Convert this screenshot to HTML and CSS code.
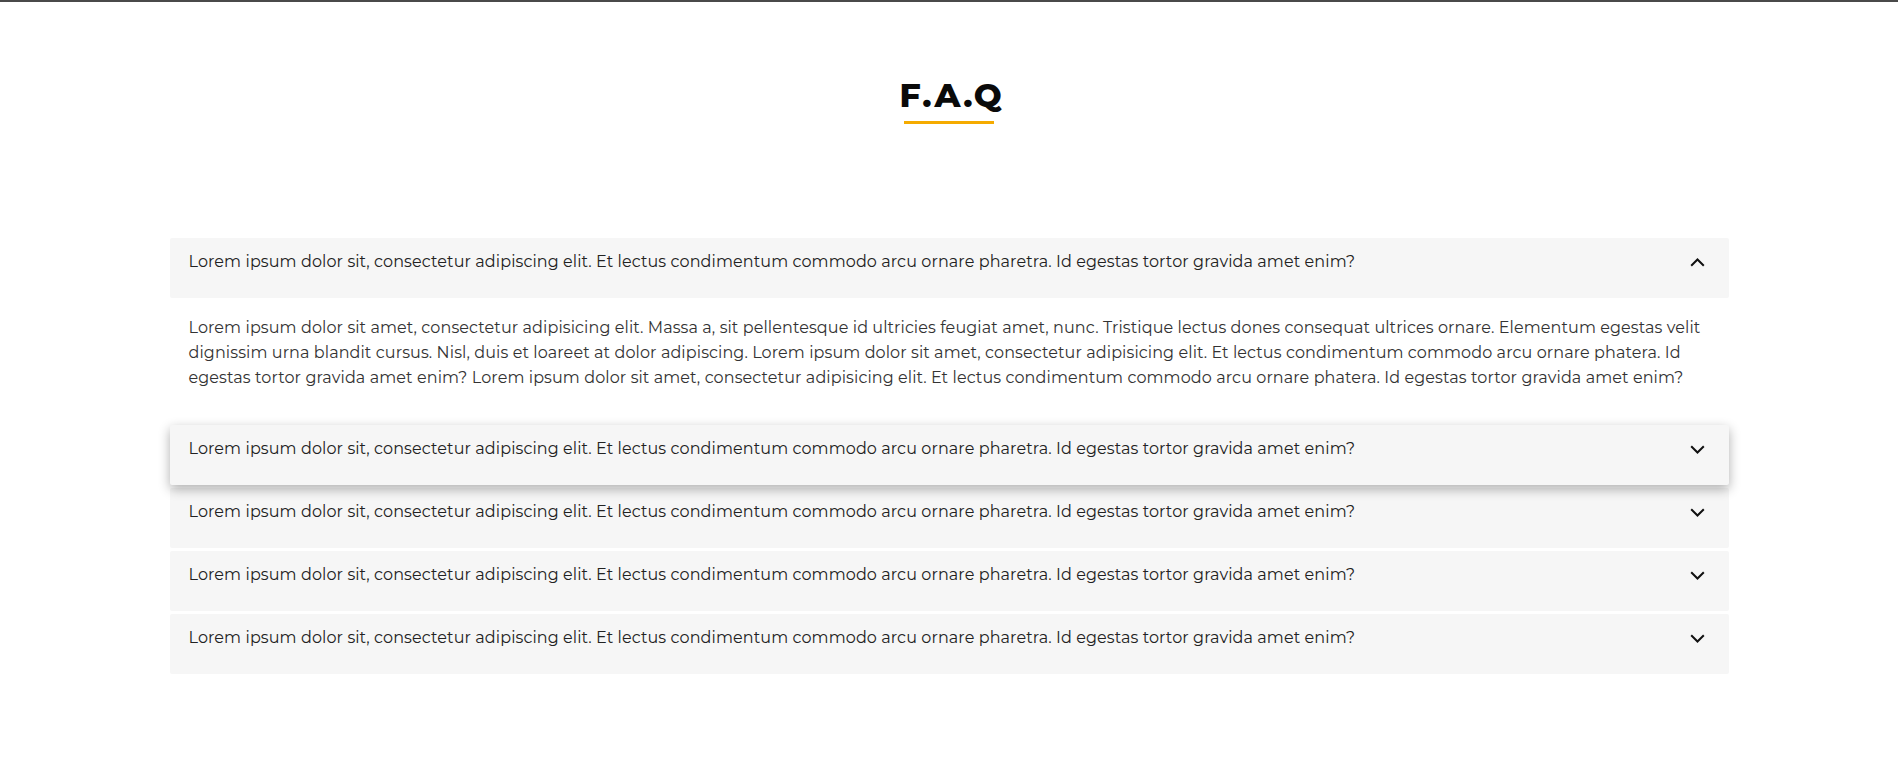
FILE: index.html
```html
<!DOCTYPE html>
<html lang="en">
<head>
<meta charset="utf-8">
<title>F.A.Q</title>
<link rel="stylesheet" href="styles.css">
</head>
<body>
<div class="topbar"></div>
<section class="faq">
  <div class="faq-title">
    <h2>F.A.Q</h2>
    <span class="faq-underline"></span>
  </div>
  <div class="accordion">
    <div class="item open">
      <div class="question">
        <span>Lorem ipsum dolor sit, consectetur adipiscing elit. Et lectus condimentum commodo arcu ornare pharetra. Id egestas tortor gravida amet enim?</span>
        <svg class="chev" width="15" height="9" viewBox="0 0 15 9"><path d="M1.2 7.8 L7.5 1.5 L13.8 7.8" fill="none" stroke="#111" stroke-width="2"/></svg>
      </div>
      <div class="answer">Lorem ipsum dolor sit amet, consectetur adipisicing elit. Massa a, sit pellentesque id ultricies feugiat amet, nunc. Tristique lectus dones consequat ultrices ornare. Elementum egestas velit dignissim urna blandit cursus. Nisl, duis et loareet at dolor adipiscing. Lorem ipsum dolor sit amet, consectetur adipisicing elit. Et lectus condimentum commodo arcu ornare phatera. Id egestas tortor gravida amet enim? Lorem ipsum dolor sit amet, consectetur adipisicing elit. Et lectus condimentum commodo arcu ornare phatera. Id egestas tortor gravida amet enim?</div>
    </div>
    <div class="item hover">
      <div class="question">
        <span>Lorem ipsum dolor sit, consectetur adipiscing elit. Et lectus condimentum commodo arcu ornare pharetra. Id egestas tortor gravida amet enim?</span>
        <svg class="chev" width="15" height="9" viewBox="0 0 15 9"><path d="M1.2 1.2 L7.5 7.5 L13.8 1.2" fill="none" stroke="#111" stroke-width="2"/></svg>
      </div>
    </div>
    <div class="item">
      <div class="question">
        <span>Lorem ipsum dolor sit, consectetur adipiscing elit. Et lectus condimentum commodo arcu ornare pharetra. Id egestas tortor gravida amet enim?</span>
        <svg class="chev" width="15" height="9" viewBox="0 0 15 9"><path d="M1.2 1.2 L7.5 7.5 L13.8 1.2" fill="none" stroke="#111" stroke-width="2"/></svg>
      </div>
    </div>
    <div class="item">
      <div class="question">
        <span>Lorem ipsum dolor sit, consectetur adipiscing elit. Et lectus condimentum commodo arcu ornare pharetra. Id egestas tortor gravida amet enim?</span>
        <svg class="chev" width="15" height="9" viewBox="0 0 15 9"><path d="M1.2 1.2 L7.5 7.5 L13.8 1.2" fill="none" stroke="#111" stroke-width="2"/></svg>
      </div>
    </div>
    <div class="item">
      <div class="question">
        <span>Lorem ipsum dolor sit, consectetur adipiscing elit. Et lectus condimentum commodo arcu ornare pharetra. Id egestas tortor gravida amet enim?</span>
        <svg class="chev" width="15" height="9" viewBox="0 0 15 9"><path d="M1.2 1.2 L7.5 7.5 L13.8 1.2" fill="none" stroke="#111" stroke-width="2"/></svg>
      </div>
    </div>
  </div>
</section>
</body>
</html>
```

FILE: styles.css
```css
* { box-sizing: border-box; }
html, body {
  margin: 0;
  padding: 0;
  background: #fff;
}
body {
  font-family: Montserrat, Inter, "Noto Sans", sans-serif;
  color: #222;
}
.topbar {
  height: 2px;
  background: #4a4a4a;
}
.faq {
  padding-top: 73px;
}
.faq-title {
  display: flex;
  flex-direction: column;
  align-items: center;
}
.faq-title h2 {
  margin: 0;
  padding-left: 5px;
  font-size: 33px;
  line-height: 41px;
  font-weight: 800;
  letter-spacing: 1.8px;
  color: #0a0a0a;
}
.faq-underline {
  display: block;
  width: 90px;
  height: 3px;
  margin-top: 5px;
  background: #f5ab00;
}
.accordion {
  width: 1559px;
  margin: 114px auto 0;
  display: flex;
  flex-direction: column;
  gap: 3px;
}
.item {
  background: #fff;
}
.question {
  display: flex;
  justify-content: space-between;
  align-items: flex-start;
  height: 60px;
  padding: 12px 24px 0 19px;
  background: #f6f6f6;
  font-size: 16px;
  line-height: 24px;
  letter-spacing: 0.1px;
  color: #222;
  border-radius: 2px;
}
.chev {
  margin-top: 8px;
}
.hover .question {
  box-shadow: 0 4px 12px rgba(0, 0, 0, 0.32);
  position: relative;
}
.answer {
  padding: 17px 19px 32px;
  font-size: 16px;
  line-height: 25px;
  letter-spacing: 0.1px;
  color: #333;
}
```
